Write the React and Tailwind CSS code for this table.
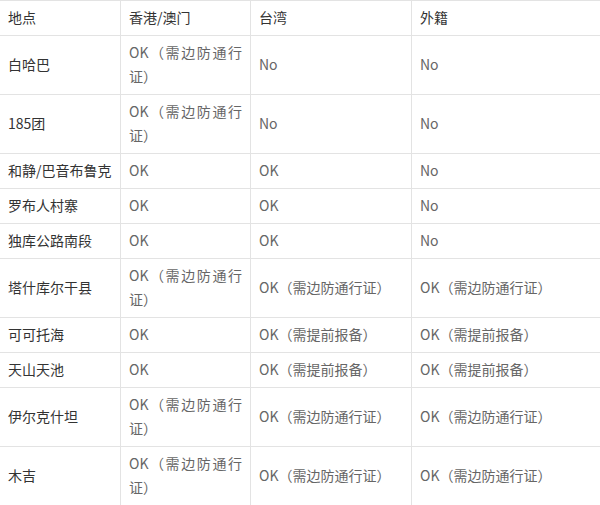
const rows = [
  ["白哈巴", "OK（需边防通行证）", "No", "No"],
  ["185团", "OK（需边防通行证）", "No", "No"],
  ["和静/巴音布鲁克", "OK", "OK", "No"],
  ["罗布人村寨", "OK", "OK", "No"],
  ["独库公路南段", "OK", "OK", "No"],
  ["塔什库尔干县", "OK（需边防通行证）", "OK（需边防通行证）", "OK（需边防通行证）"],
  ["可可托海", "OK", "OK（需提前报备）", "OK（需提前报备）"],
  ["天山天池", "OK", "OK（需提前报备）", "OK（需提前报备）"],
  ["伊尔克什坦", "OK（需边防通行证）", "OK（需边防通行证）", "OK（需边防通行证）"],
  ["木吉", "OK（需边防通行证）", "OK（需边防通行证）", "OK（需边防通行证）"],
];

function Cell({ children, first, last, head }) {
  return (
    <div
      className={`flex items-center border-b border-[#e3e3e3] pt-[4px] pb-[6px] px-2 ${
        last ? "" : "border-r"
      } ${first || head ? "text-[#333]" : "text-[#666]"}`}
    >
      <div className="w-full text-justify">{children}</div>
    </div>
  );
}

export default function App() {
  return (
    <div
      className="w-[600px] h-[505px] overflow-hidden bg-white text-[14px] leading-[24px]"
      style={{ fontFamily: '"Noto Sans CJK SC", "Noto Sans", sans-serif' }}
    >
      <div className="grid grid-cols-[121px_130px_161px_1fr] border-t border-[#e3e3e3]">
        {["地点", "香港/澳门", "台湾", "外籍"].map((h, i) => (
          <Cell key={h} head first={i === 0} last={i === 3}>
            {h}
          </Cell>
        ))}
        {rows.map((r) =>
          r.map((c, i) => (
            <Cell key={r[0] + i} first={i === 0} last={i === 3}>
              {c}
            </Cell>
          ))
        )}
      </div>
    </div>
  );
}
